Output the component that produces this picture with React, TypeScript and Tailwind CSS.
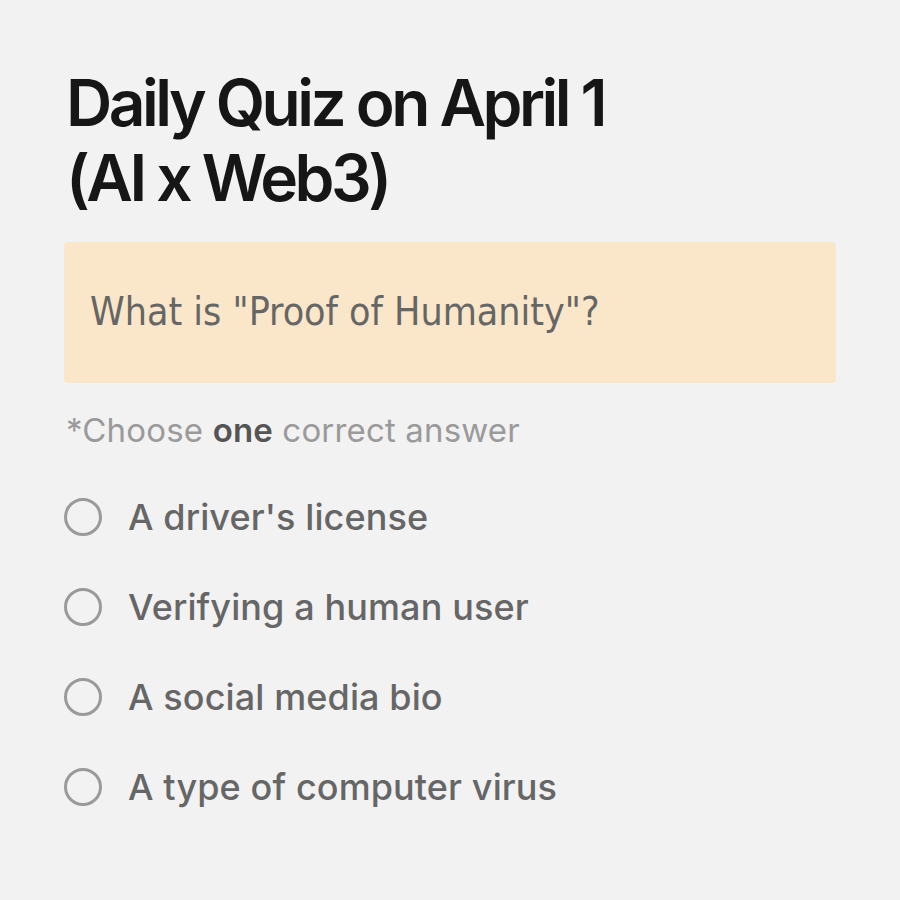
import React from 'react';

const options = [
  "A driver's license",
  'Verifying a human user',
  'A social media bio',
  'A type of computer virus',
];

const Radio: React.FC<{ label: string }> = ({ label }) => (
  <label className="flex items-center gap-[26px] h-[90px]">
    <span className="w-[38px] h-[38px] rounded-full border-[3px] border-[#9a9a9a] shrink-0" />
    <span className="text-[36px] font-medium text-[#666666] tracking-[0.003em]">{label}</span>
  </label>
);

export default function App() {
  return (
    <div className="min-h-screen w-[900px] h-[900px] bg-[#f2f2f2] font-['Inter',sans-serif]">
      <div className="px-[64px] pt-[65px]">
        <h1 className="text-[64px] leading-[75px] font-semibold text-[#161616] tracking-[-0.055em] pl-[2px]">
          Daily Quiz on April 1
          <br />
          (AI x Web3)
        </h1>

        <div className="mt-[27px] h-[141px] rounded-[4px] bg-[#fae6c8] flex items-center px-[26px]">
          <p className="text-[39px] text-[#666666] font-['DejaVu_Sans_Condensed','DejaVu_Sans',sans-serif] font-light">
            What is "Proof of Humanity"?
          </p>
        </div>

        <p className="mt-[27px] text-[33px] leading-[40px] text-[#9a9a9a] pl-[2px] tracking-[0.005em]">
          *Choose <span className="font-semibold text-[#555555]">one</span> correct answer
        </p>

        <div className="mt-[22px] flex flex-col">
          {options.map((o) => (
            <Radio key={o} label={o} />
          ))}
        </div>
      </div>
    </div>
  );
}
